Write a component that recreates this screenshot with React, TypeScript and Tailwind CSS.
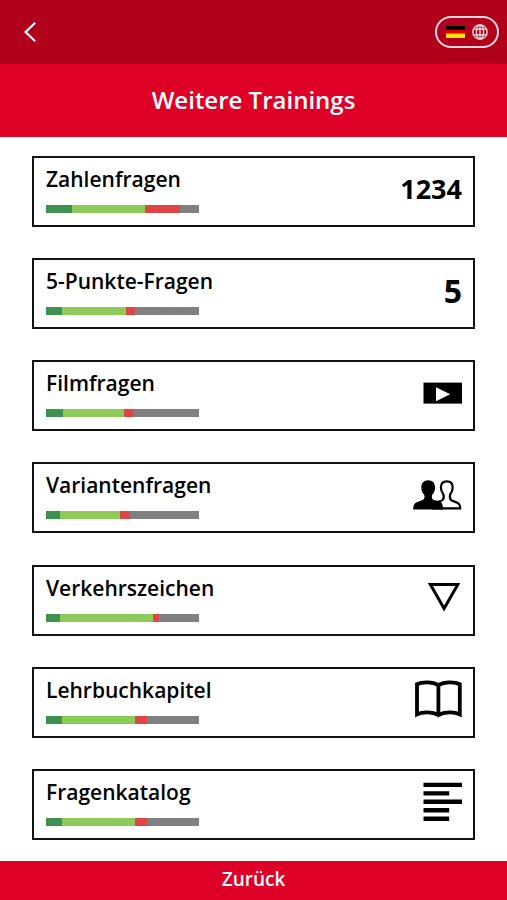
import type { ReactNode } from "react";

type Training = {
  title: string;
  // very good, good, wrong, open
  progress: [number, number, number, number];
  symbol: ReactNode;
};

const segmentColors = ["bg-[#3f914f]", "bg-[#8ccb58]", "bg-[#e04545]", "bg-[#808080]"];

function Icon({ children }: { children: ReactNode }) {
  return (
    <svg viewBox="0 0 48 46" className="h-[46px] w-12 overflow-visible" aria-hidden="true">
      {children}
    </svg>
  );
}

function FilmIcon() {
  return (
    <Icon>
      <rect x="9.5" y="12.6" width="38.5" height="21" fill="#000" />
      <path d="M22 17.2 L36.2 24.2 L22 31.2 Z" fill="#fff" />
    </Icon>
  );
}

function PeopleIcon() {
  const person =
    "M32.8 9.3 C28.8 9.3 26.9 12 26.9 15.6 C26.9 18.6 28 20.6 29.4 22.4 C30 24.6 29.8 26.8 28.6 28 C26.5 29.6 21.5 30 19.8 32.4 C19 33.6 18.8 35 18.8 36.4 L46.2 36.4 C46.2 34.6 46 33 45 32 C43.2 29.8 38.8 29.6 37 28 C35.8 26.8 35.6 24.6 36.2 22.4 C37.6 20.6 38.7 18.6 38.7 15.6 C38.7 12 36.8 9.3 32.8 9.3 Z";
  return (
    <Icon>
      <path d={person} fill="#fff" stroke="#000" strokeWidth="2.2" />
      <path
        d="M14.2 8.2 C9.6 8.2 7.3 11.4 7.3 15.4 C7.3 18.6 8.6 21 10.2 22.8 C10.8 25 10.6 26.6 9.4 27.6 C7.4 29.2 2.2 29.6 0.4 32.2 C-0.6 33.6 -0.8 35.4 -0.8 37.5 L29 37.5 C29 34.6 28.8 32.4 27.4 30.4 C25.4 28.8 20.8 29 19 27.6 C17.8 26.6 17.6 25 18.2 22.8 C19.8 21 21.1 18.6 21.1 15.4 C21.1 11.4 18.8 8.2 14.2 8.2 Z"
        fill="#000"
      />
    </Icon>
  );
}

function SignIcon() {
  return (
    <Icon>
      <path d="M16.4 9.6 L43.8 9.6 L30.1 33.4 Z" fill="none" stroke="#000" strokeWidth="3" />
    </Icon>
  );
}

function BookIcon() {
  return (
    <Icon>
      <path
        d="M24.4 8 C18.5 4.6 8 4.6 3 7.2 L3 37.4 C9 34.6 18.5 34.8 24.4 38.2 C30.3 34.8 39.8 34.6 45.8 37.4 L45.8 7.2 C40.8 4.6 30.3 4.6 24.4 8 Z M24.4 8 L24.4 38.2"
        fill="none"
        stroke="#000"
        strokeWidth="3.8"
      />
    </Icon>
  );
}

function ListIcon() {
  return (
    <Icon>
      <path
        d="M9.5 5.9 H48 M9.5 14.4 H35.2 M9.5 22.8 H48 M9.5 31.3 H35.2 M9.5 39.7 H35.2"
        stroke="#000"
        strokeWidth="4.4"
      />
    </Icon>
  );
}

const trainings: Training[] = [
  {
    title: "Zahlenfragen",
    progress: [26, 73, 35, 19],
    symbol: <span className="text-[27px] leading-[46px] font-bold">1234</span>,
  },
  {
    title: "5-Punkte-Fragen",
    progress: [16, 64, 9, 64],
    symbol: <span className="text-[32px] leading-[46px] font-bold">5</span>,
  },
  { title: "Filmfragen", progress: [17, 61, 9, 66], symbol: <FilmIcon /> },
  { title: "Variantenfragen", progress: [14, 60, 10, 69], symbol: <PeopleIcon /> },
  { title: "Verkehrszeichen", progress: [14, 93, 6, 40], symbol: <SignIcon /> },
  { title: "Lehrbuchkapitel", progress: [16, 73, 12, 52], symbol: <BookIcon /> },
  { title: "Fragenkatalog", progress: [16, 73, 12, 52], symbol: <ListIcon /> },
];

function ProgressBar({ values }: { values: number[] }) {
  return (
    <span className="mt-[13px] flex h-2 w-[153px]">
      {values.map((value, i) => (
        <span key={i} className={segmentColors[i]} style={{ flexGrow: value }} />
      ))}
    </span>
  );
}

function TrainingCard({ title, progress, symbol }: Training) {
  return (
    <button
      type="button"
      className="flex h-[71px] w-full items-start justify-between border-2 border-[#111] bg-white pt-2 pr-[11px] pl-3 text-left"
    >
      <span className="flex flex-col">
        <span className="text-[21px] leading-[26px] font-semibold">{title}</span>
        <ProgressBar values={progress} />
      </span>
      {symbol}
    </button>
  );
}

function LanguageButton() {
  return (
    <button
      type="button"
      aria-label="Sprache wählen"
      className="flex h-8 w-16 items-center justify-center gap-[7px] rounded-full border-2 border-[#f7d9dd]"
    >
      <svg viewBox="0 0 19 12" className="h-3 w-[19px]" aria-hidden="true">
        <rect width="19" height="4" fill="#000" />
        <rect y="4" width="19" height="4" fill="#e00000" />
        <rect y="7.5" width="19" height="4.5" fill="#ffe600" />
      </svg>
      <svg viewBox="0 0 16 16" className="h-4 w-4" fill="none" stroke="#fbe3e6" strokeWidth="1.3" aria-hidden="true">
        <circle cx="8" cy="8" r="7.2" />
        <ellipse cx="8" cy="8" rx="3.6" ry="7.2" />
        <path d="M8 0.8 V15.2 M1.6 5.2 H14.4 M1.6 10.8 H14.4" />
      </svg>
    </button>
  );
}

export default function App() {
  return (
    <div className="flex min-h-screen flex-col bg-white font-['Open_Sans',sans-serif] text-black">
      <header>
        <div className="flex h-16 items-center justify-between bg-[#b0001b] pr-2 pl-4">
          <button type="button" aria-label="Zurück" className="flex h-8 w-7 items-center justify-center">
            <svg viewBox="0 0 12 20" className="h-5 w-3" fill="none" stroke="#fff" strokeWidth="2.2" aria-hidden="true">
              <path d="M11.2 0.8 L1.6 10 L11.2 19.2" />
            </svg>
          </button>
          <LanguageButton />
        </div>
        <h1 className="h-[73px] bg-[#df0028] text-center text-2xl leading-[72px] font-semibold text-white">
          Weitere Trainings
        </h1>
      </header>

      <main className="flex flex-1 flex-col justify-between gap-[31px] px-8 pt-[19px] pb-[21px]">
        {trainings.map((training) => (
          <TrainingCard key={training.title} {...training} />
        ))}
      </main>

      <button type="button" className="h-[39px] bg-[#df0028] pb-[3px] text-[19px] leading-8 font-semibold text-white">
        Zurück
      </button>
    </div>
  );
}
